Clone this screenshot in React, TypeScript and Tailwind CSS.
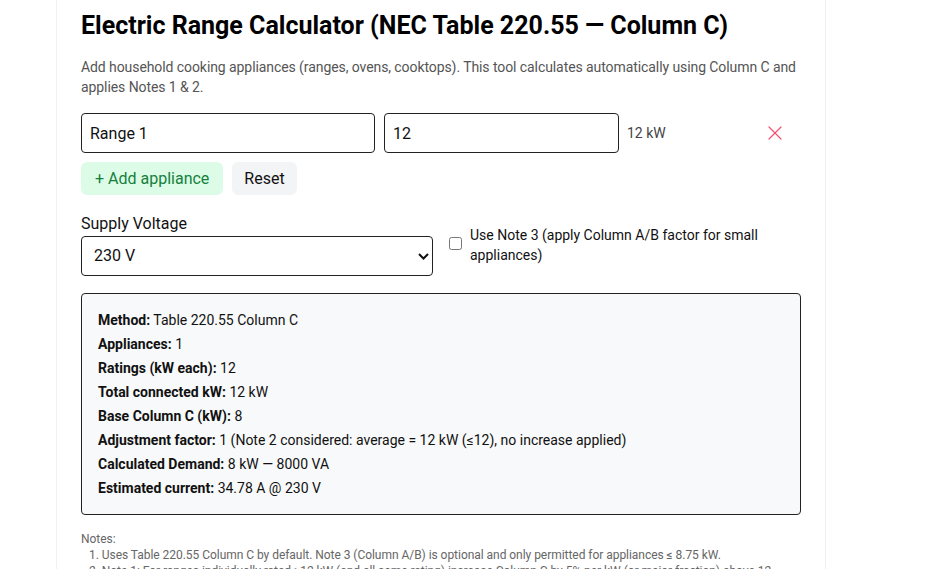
import { X } from "lucide-react";

const rows: [string, string][] = [
  ["Method:", "Table 220.55 Column C"],
  ["Appliances:", "1"],
  ["Ratings (kW each):", "12"],
  ["Total connected kW:", "12 kW"],
  ["Base Column C (kW):", "8"],
  ["Adjustment factor:", "1 (Note 2 considered: average = 12 kW (≤12), no increase applied)"],
  ["Calculated Demand:", "8 kW — 8000 VA"],
  ["Estimated current:", "34.78 A @ 230 V"],
];

export default function App() {
  return (
    <div className="min-h-screen bg-white font-['Roboto',sans-serif] text-[#111]">
      <div className="ml-[56px] w-[770px] border-x border-[#f1f1f1] bg-white px-6 pb-6 pt-[10px]">
        {/* Header */}
        <h1 className="text-[25px] font-bold leading-[32px] text-black">
          Electric Range Calculator (NEC Table 220.55 — Column C)
        </h1>
        <p className="mt-[15px] text-[14px] leading-[20px] tracking-[-0.08px] text-[#555]">
          Add household cooking appliances (ranges, ovens, cooktops). This tool calculates automatically using Column C and
          applies Notes 1 &amp; 2.
        </p>

        {/* Appliance row */}
        <div className="mt-[16px] flex items-center">
          <input
            defaultValue="Range 1"
            className="h-10 w-[294px] rounded border border-[#222] px-2 text-[16px] outline-none"
          />
          <input
            defaultValue="12"
            className="ml-[9px] h-10 w-[235px] rounded border border-[#222] px-2 text-[16px] outline-none"
          />
          <span className="ml-2 w-[136px] text-[14px] text-[#444]">12 kW</span>
          <button className="flex h-6 w-6 items-center justify-center text-[#f4506e]">
            <X className="h-6 w-6" strokeWidth={1.2} />
          </button>
        </div>

        {/* Buttons */}
        <div className="mt-[9px] flex gap-[9px]">
          <button className="h-[33px] rounded-md bg-[#dcfce7] px-[14px] text-[16px] text-[#15803d]">
            + Add appliance
          </button>
          <button className="h-[33px] rounded-md bg-[#f3f4f6] px-3 text-[16px] text-[#111]">Reset</button>
        </div>

        {/* Voltage */}
        <div className="mt-[19px] flex items-start">
          <div className="flex flex-col">
            <label className="text-[16px] leading-[20px]">Supply Voltage</label>
            <div className="relative mt-[2px]">
              <select
                defaultValue="230"
                className="h-10 w-[352px] appearance-none rounded border border-[#222] bg-white px-3 text-[16px] outline-none"
              >
                <option value="230">230 V</option>
              </select>
              <svg
                className="pointer-events-none absolute right-[4px] top-[17px] h-[7px] w-[11px]"
                viewBox="0 0 11 7"
                fill="none"
                stroke="#111"
                strokeWidth="2"
              >
                <path d="M1 1l4.5 4.5L10 1" />
              </svg>
            </div>
          </div>
          <label className="ml-[16px] mt-[11px] flex flex-1 items-start gap-2 text-[14px] leading-[20px]">
            <input type="checkbox" className="m-0 mt-[12px] h-[13px] w-[13px] shrink-0" />
            <span>Use Note 3 (apply Column A/B factor for small appliances)</span>
          </label>
        </div>

        {/* Result */}
        <div className="mt-[17px] rounded border border-[#222] bg-[#f8f9fa] px-4 py-[14px] text-[14px] leading-[24px]">
          {rows.map(([k, v]) => (
            <div key={k}>
              <b className="font-bold">{k}</b> {v}
            </div>
          ))}
        </div>

        {/* Notes */}
        <div className="mt-[16px] text-[12px] leading-[16px] tracking-[-0.04px] text-[#666]">
          <div>Notes:</div>
          <div className="pl-2">
            1. Uses Table 220.55 Column C by default. Note 3 (Column A/B) is optional and only permitted for appliances ≤ 8.75 kW.
          </div>
          <div className="pl-2">
            2. Note 1: For ranges individually rated &gt;12 kW (and all same rating) increase Column C by 5% per kW (or major
            fraction) above 12.
          </div>
        </div>
      </div>
    </div>
  );
}
